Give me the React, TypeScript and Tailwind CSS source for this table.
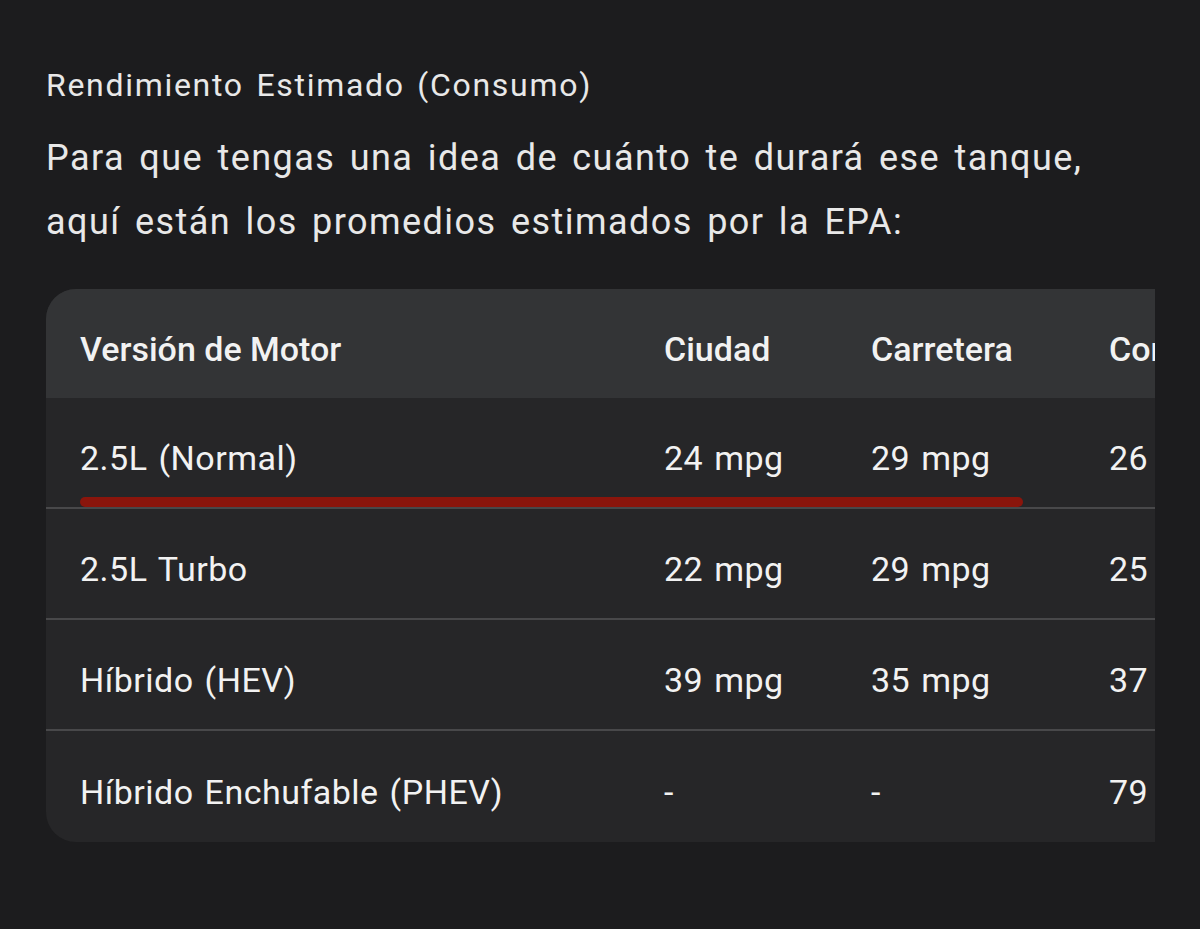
import React from 'react';

const rows = [
  { name: '2.5L (Normal)', city: '24 mpg', road: '29 mpg', comb: '26 mpg', mark: true },
  { name: '2.5L Turbo', city: '22 mpg', road: '29 mpg', comb: '25 mpg' },
  { name: 'Híbrido (HEV)', city: '39 mpg', road: '35 mpg', comb: '37 mpg' },
  { name: 'Híbrido Enchufable (PHEV)', city: '-', road: '-', comb: '79 MPGe' },
];

const cols = 'grid grid-cols-[584px_207px_238px_200px]';

export default function App() {
  return (
    <div className="h-[929px] w-[1200px] overflow-hidden bg-[#1c1c1e] font-['Roboto',sans-serif] text-[#e8e8e8]">
      <div className="px-[46px] pt-[66px]">
        <h2 className="text-[32px] leading-[38px] tracking-[1.7px] [word-spacing:3px]">Rendimiento Estimado (Consumo)</h2>
        <p className="mt-[22px] text-[36px] leading-[64px] tracking-[1.45px] [word-spacing:4px]">
          Para que tengas una idea de cuánto te durará ese tanque,
          <br />
          aquí están los promedios estimados por la EPA:
        </p>

        <div className="mt-[35px] w-[1109px] overflow-hidden rounded-l-[30px] bg-[#262628] text-[#f2f2f2]">
          <div className={`${cols} h-[109px] items-center bg-[#333436] pt-[12px] text-[34px] font-medium`}>
            <div className="pl-[34px]">Versión de Motor</div>
            <div className="pl-[34px]">Ciudad</div>
            <div className="pl-[34px]">Carretera</div>
            <div className="pl-[34px] whitespace-nowrap">Combinado</div>
          </div>
          {rows.map((r, i) => (
            <div
              key={r.name}
              className={`${cols} relative h-[111px] items-center pt-[12px] text-[34px] tracking-[0.5px] [word-spacing:2px] ${i < rows.length - 1 ? 'border-b-2 border-[#48484a]' : ''}`}
            >
              <div className="pl-[34px] whitespace-nowrap">{r.name}</div>
              <div className="pl-[34px]">{r.city}</div>
              <div className="pl-[34px]">{r.road}</div>
              <div className="pl-[34px] whitespace-nowrap">{r.comb}</div>
              {r.mark && (
                <div className="absolute bottom-0 left-[34px] h-[10px] w-[943px] rounded-full bg-[#8a150c] blur-[0.5px]" />
              )}
            </div>
          ))}
        </div>
      </div>
    </div>
  );
}
